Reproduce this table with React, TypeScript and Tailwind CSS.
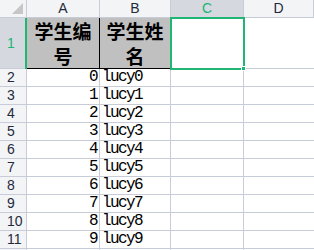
const cols = ["A", "B", "C", "D"];

const rows = Array.from({ length: 10 }, (_, i) => ({ num: i + 2, id: i, name: "lucy" + i }));

export default function App() {
  return (
    <div className="relative w-[314px] h-[250px] overflow-hidden bg-white font-['Liberation_Sans',sans-serif]">
      <div className="grid grid-cols-[27px_73px_71px_73px_1fr] grid-rows-[18px_51px_repeat(11,18px)]">
        {/* corner */}
        <div className="relative bg-[#f3f4f6] border-r border-b border-[#c8ccd8]">
          <div className="absolute left-[12px] top-[3px] w-0 h-0 border-l-[11px] border-l-transparent border-b-[11px] border-b-[#c6c6c6]" />
        </div>
        {cols.map((c) => (
          <div
            key={c}
            className={
              "flex items-center justify-center text-[14px] border-r border-b border-[#c8ccd8] " +
              (c === "C" ? "bg-[#d5d8de] text-[#21b573]" : "bg-[#f3f4f6] text-[#1f2a3c]")
            }
          >
            {c}
          </div>
        ))}

        {/* row 1 */}
        <div className="relative flex items-center pl-[7px] text-[14px] text-[#21b573] bg-[#d5d8de] border-r border-b border-[#c8ccd8]">
          1
          <div className="absolute right-[-1px] top-0 bottom-[-1px] w-[2px] bg-[#21b573]" />
        </div>
        <div className="flex items-center justify-center text-center bg-[#c0c0c0] border-r border-b border-black font-['Noto_Sans_CJK_SC',sans-serif] font-semibold text-[19px] leading-[25px] text-black">
          学生编<br />号
        </div>
        <div className="flex items-center justify-center text-center bg-[#c0c0c0] border-r border-b border-black font-['Noto_Sans_CJK_SC',sans-serif] font-semibold text-[19px] leading-[25px] text-black">
          学生姓<br />名
        </div>
        <div className="border-r border-b border-[#c8ccd8]" />
        <div className="border-b border-[#c8ccd8]" />

        {rows.map((r) => (
          <div key={r.num} className="contents">
            <div className="flex items-center pl-[7px] text-[14px] text-[#1f2a3c] bg-[#f3f4f6] border-r border-b border-[#c8ccd8]">
              {r.num}
            </div>
            <div className="flex items-end justify-end pr-[2px] text-[16px] leading-[18px] tracking-[-1.6px] font-['Liberation_Mono',monospace] text-black border-r border-b border-[#c8ccd8]">
              {r.id}
            </div>
            <div className="flex items-end pl-[2px] text-[16px] leading-[18px] tracking-[-1.6px] font-['Liberation_Mono',monospace] text-black border-r border-b border-[#c8ccd8]">
              {r.name}
            </div>
            <div className="border-r border-b border-[#c8ccd8]" />
            <div className="border-b border-[#c8ccd8]" />
          </div>
        ))}

        {/* partial row 12 */}
        <div className="bg-[#f3f4f6] border-r border-[#c8ccd8]" />
        <div className="border-r border-[#c8ccd8]" />
        <div className="border-r border-[#c8ccd8]" />
        <div className="border-r border-[#c8ccd8]" />
        <div />
      </div>

      {/* selection box on C1 */}
      <div className="absolute left-[170px] top-[17px] w-[75px] h-[53px] border-2 border-[#21b573]" />
      <div className="absolute left-[241px] top-[66px] w-[5px] h-[5px] bg-[#21b573] border border-white" />
    </div>
  );
}
